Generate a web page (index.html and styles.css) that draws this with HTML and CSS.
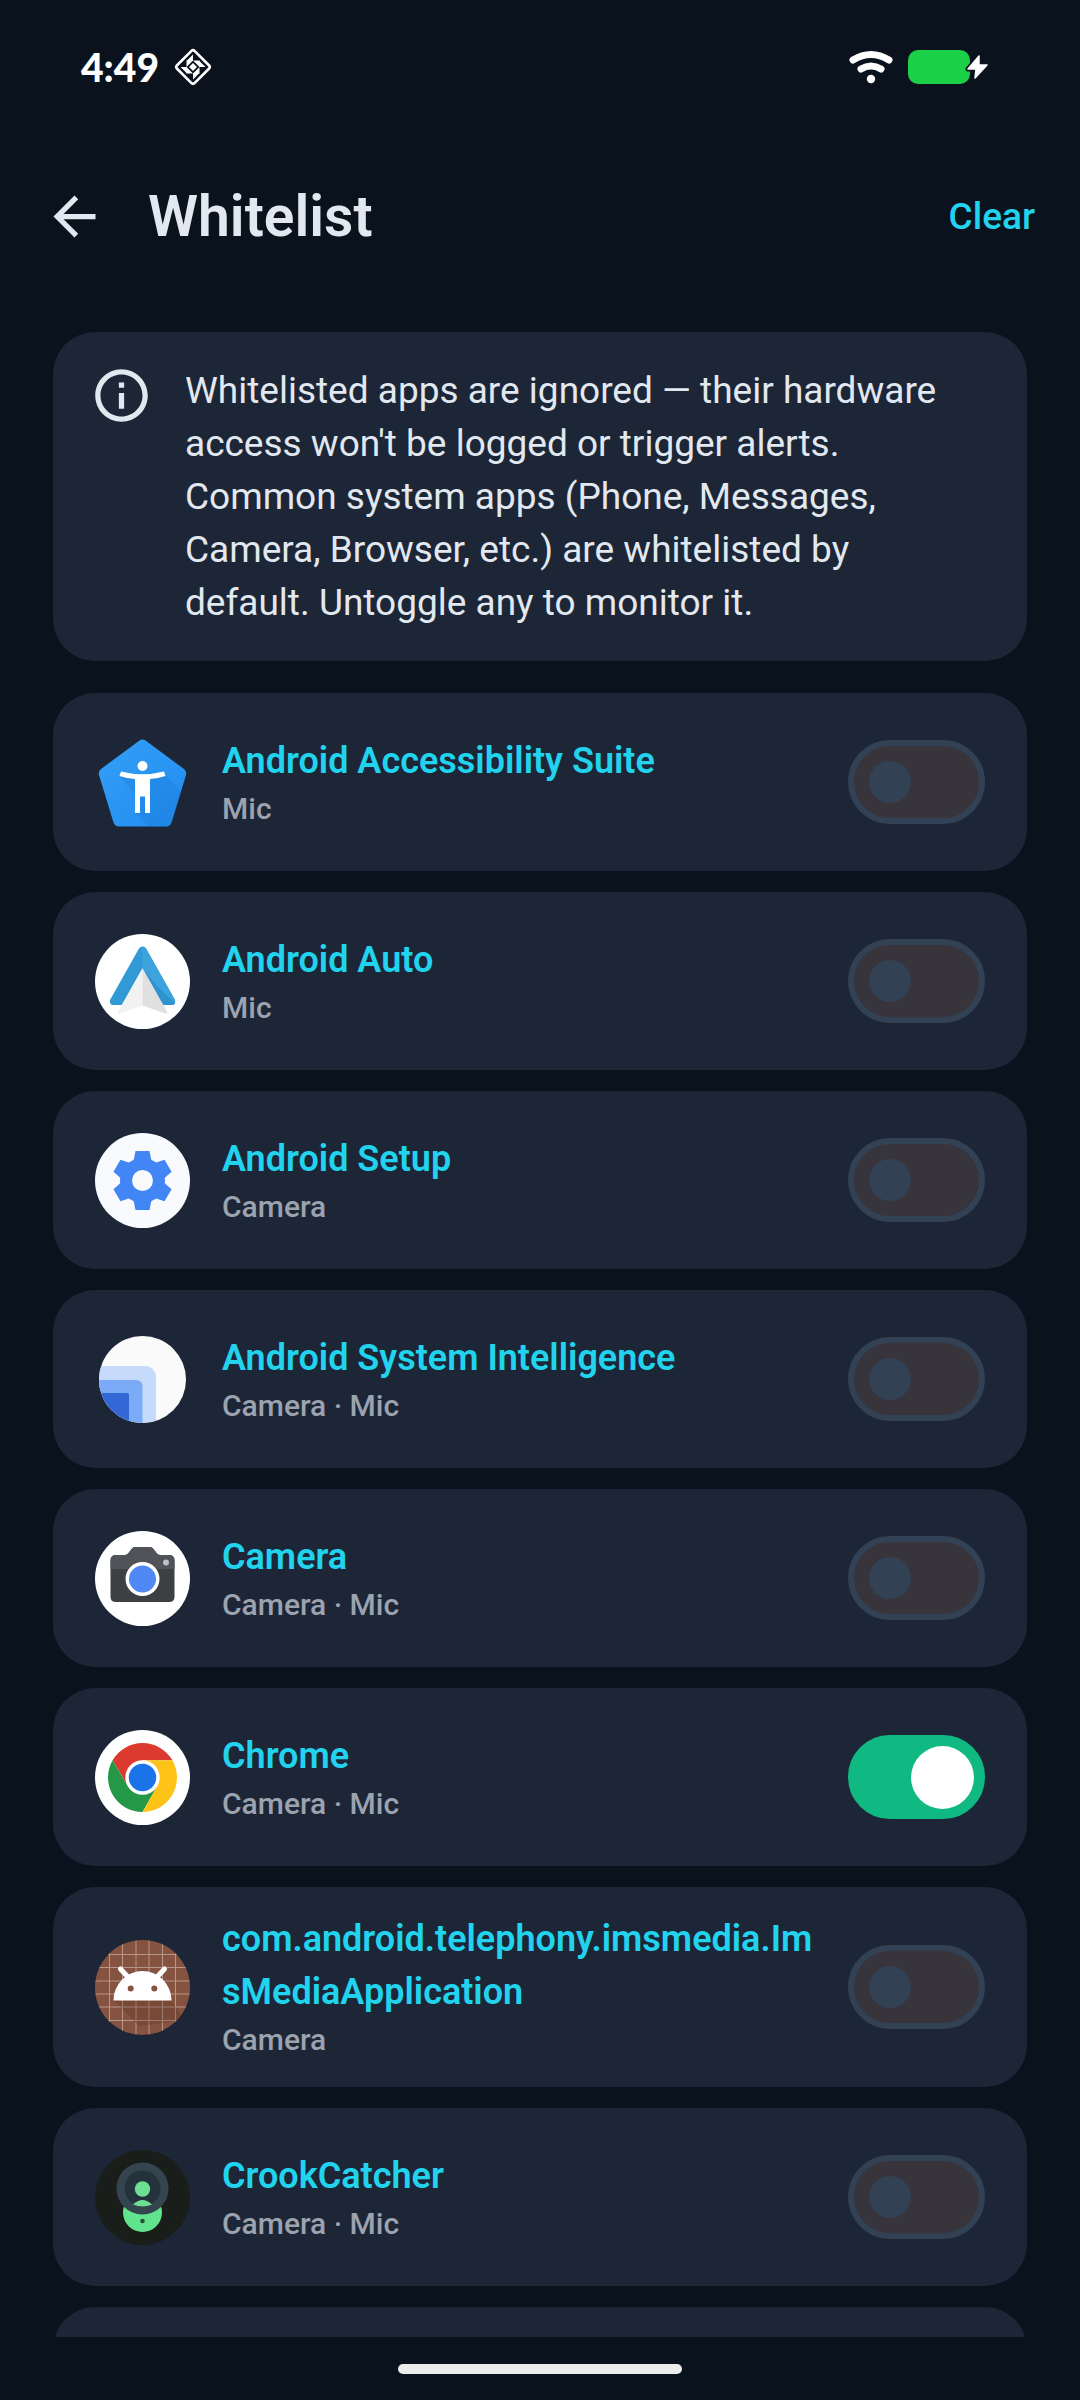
FILE: index.html
```html
<!doctype html>
<html lang="en">
    <head>
        <meta charset="UTF-8" />
        <meta name="viewport" content="width=device-width, initial-scale=1.0" />
        <title>Whitelist</title>
        <link rel="stylesheet" href="styles.css">
    </head>
    <body>
        <div class="status-bar">
            <div class="status-group">
                <span class="clock">4:49</span>
                <svg class="status-app" viewBox="-19 -19 38 38" fill="#fff">
                    <rect x="-12.500" y="-12.500" width="25" height="25" rx="2.500" transform="rotate(45)" fill="none" stroke="#fff" stroke-width="2.600" />
                    <path id="blade" d="M0 -12.500V-6H-6.500ZM0 -6.500H6.500V0ZM0 0V-4L4 0Z" />
                    <use href="#blade" transform="rotate(90)" />
                    <use href="#blade" transform="rotate(180)" />
                    <use href="#blade" transform="rotate(270)" />
                </svg>
            </div>
            <div class="status-group">
                <svg class="wifi" viewBox="0 0 44 34" fill="none" stroke="#fff" stroke-width="7" stroke-linecap="round">
                    <path d="M4 10Q22 -1 40 10M12 19Q22 13 32 19" />
                    <circle cx="22" cy="29" r="4.200" fill="#fff" stroke="none" />
                </svg>
                <svg class="battery" viewBox="0 0 82 34">
                    <rect width="62" height="34" rx="10" fill="#1ad047" />
                    <path d="M71 6L60 19H68L67 28L79 15H71Z" fill="#fff" stroke="#0b121e" stroke-width="5" stroke-linejoin="round" />
                    <path d="M71 6L60 19H68L67 28L79 15H71Z" fill="#fff" stroke="#fff" stroke-width="1.500" stroke-linejoin="round" />
                </svg>
            </div>
        </div>

        <header class="app-bar">
            <button type="button" class="back" aria-label="Back">
                <svg viewBox="0 0 24 24" fill="#e2e8f0">
                    <path d="M20 11H7.83l5.59-5.59L12 4l-8 8 8 8 1.41-1.41L7.83 13H20v-2z" />
                </svg>
            </button>
            <h1>Whitelist</h1>
            <button type="button" class="clear">Clear</button>
        </header>

        <main>
            <section class="card info">
                <svg class="info-icon" viewBox="0 0 24 24" fill="#e2e8f0">
                    <path d="M11 7h2v2h-2zm0 4h2v6h-2zm1-9C6.48 2 2 6.48 2 12s4.48 10 10 10 10-4.48 10-10S17.52 2 12 2zm0 18c-4.41 0-8-3.59-8-8s3.59-8 8-8 8 3.59 8 8-3.59 8-8 8z" />
                </svg>
                <p>
                    Whitelisted apps are ignored — their hardware access won't be
                    logged or trigger alerts. Common system apps (Phone, Messages,
                    Camera, Browser, etc.) are whitelisted by default. Untoggle any
                    to monitor it.
                </p>
            </section>

            <ul class="apps">
                <li class="card app">
                    <svg class="app-icon" viewBox="0 0 95 95">
                        <defs>
                            <linearGradient id="a11y" x1="0" y1="0" x2="1" y2="1">
                                <stop offset="0" stop-color="#35a0f8" />
                                <stop offset="1" stop-color="#1f8bee" />
                            </linearGradient>
                        </defs>
                        <path d="M44.500 5.500Q47.500 3.500 50.500 5.500L89 34Q92 36.500 91 40L76.500 87.500Q75 91.500 71 91.500H24Q20 91.500 18.500 87.500L4 40Q3 36.500 6 34Z" fill="url(#a11y)" />
                        <path d="M25 42L41 60V78L54 91.500H71Q75 91.500 76.500 87.500L86 57L70 39Z" fill="#1976d2" opacity=".3" />
                        <circle cx="47.500" cy="31" r="5" fill="#fff" />
                        <path d="M26 36.500Q47.500 42 69 36.500L70.500 41Q63 43.500 55 44V78H50V61.500H45V78H40V44Q32 43.500 24.500 41Z" fill="#fff" />
                    </svg>
                    <div class="app-text">
                        <label for="app1">Android Accessibility Suite</label>
                        <p>Mic</p>
                    </div>
                    <div class="switch"><input type="checkbox" id="app1" /></div>
                </li>
                <li class="card app">
                    <svg class="app-icon" viewBox="0 0 95 95">
                        <circle cx="47.500" cy="47.500" r="47.500" fill="#fff" />
                        <path d="M44 14.500Q47.500 10.500 51 14.500L80 66Q81 71 76.500 71H67.500L47.500 35L27.500 71H18.500Q14 71 15 66Z" fill="#3199d6" />
                        <path d="M47.500 12.500Q50 12.500 51 14.500L80 66Q81 71 76.500 71H67.500L47.500 35Z" fill="#3da3dd" />
                        <path d="M47.500 34L67.500 71H76.500Q79 71 80 69L62 52Z" fill="#2f93cf" />
                        <path d="M47.500 34V71.500L25 79.500Q22.500 80 23 77.500Z" fill="#f2f2f2" />
                        <path d="M47.500 34V71.500L70 79.500Q73 80 72 77.500Z" fill="#e0e0e0" />
                    </svg>
                    <div class="app-text">
                        <label for="app2">Android Auto</label>
                        <p>Mic</p>
                    </div>
                    <div class="switch"><input type="checkbox" id="app2" /></div>
                </li>
                <li class="card app">
                    <svg class="app-icon" viewBox="-47.500 -47.500 95 95">
                        <circle r="47.500" fill="#f8fafe" />
                        <g fill="#4285f4">
                            <circle r="22.500" />
                            <path id="tooth" d="M-7 -29.500H7L9.500 -17H-9.500Z" />
                            <use href="#tooth" transform="rotate(60)" />
                            <use href="#tooth" transform="rotate(120)" />
                            <use href="#tooth" transform="rotate(180)" />
                            <use href="#tooth" transform="rotate(240)" />
                            <use href="#tooth" transform="rotate(300)" />
                        </g>
                        <circle r="10.500" fill="#f8fafe" />
                    </svg>
                    <div class="app-text">
                        <label for="app3">Android Setup</label>
                        <p>Camera</p>
                    </div>
                    <div class="switch"><input type="checkbox" id="app3" /></div>
                </li>
                <li class="card app">
                    <svg class="app-icon" viewBox="0 0 95 95">
                        <clipPath id="disc"><circle cx="47.500" cy="47.500" r="43.500" /></clipPath>
                        <g clip-path="url(#disc)">
                            <rect width="95" height="95" fill="#fafafa" />
                            <rect x="-20" y="34" width="81" height="90" rx="11" fill="#c6dafc" />
                            <rect x="-20" y="48" width="67.500" height="90" rx="6" fill="#7baaf7" />
                            <rect x="-20" y="61" width="54" height="90" rx="2" fill="#3367d6" />
                        </g>
                    </svg>
                    <div class="app-text">
                        <label for="app4">Android System Intelligence</label>
                        <p>Camera · Mic</p>
                    </div>
                    <div class="switch"><input type="checkbox" id="app4" /></div>
                </li>
                <li class="card app">
                    <svg class="app-icon" viewBox="0 0 95 95">
                        <circle cx="47.500" cy="47.500" r="47.500" fill="#fff" />
                        <path d="M21 24H30Q32 24 33.500 22L37 17.500Q38 16 40 16H55Q57 16 58 17.500L61.500 22Q63 24 65 24H74Q79.500 24 79.500 29.500V66Q79.500 71 74 71H21Q15.500 71 15.500 66V29.500Q15.500 24 21 24Z" fill="#3c4043" />
                        <path d="M21 24H30Q32 24 33.500 22L37 17.500Q38 16 40 16H55Q57 16 58 17.500L61.500 22Q63 24 65 24H74Q79.500 24 79.500 29.500V38H15.500V29.500Q15.500 24 21 24Z" fill="#505458" />
                        <circle cx="47.500" cy="48" r="17" fill="#fff" />
                        <circle cx="47.500" cy="48" r="13.500" fill="#5089f4" />
                        <circle cx="71" cy="31.500" r="3" fill="#bdc1c6" />
                    </svg>
                    <div class="app-text">
                        <label for="app5">Camera</label>
                        <p>Camera · Mic</p>
                    </div>
                    <div class="switch"><input type="checkbox" id="app5" /></div>
                </li>
                <li class="card app">
                    <svg class="app-icon" viewBox="-47.500 -47.500 95 95">
                        <circle r="47.500" fill="#fff" />
                        <path d="M29.900 -17.200A34.500 34.500 0 0 0 -29.900 -17.200L-14.900 8.600L0 0V-17.200Z" fill="#dc3a2e" />
                        <path d="M-29.900 -17.200A34.500 34.500 0 0 0 0 34.500L14.900 8.600L0 0L-14.900 8.600Z" fill="#249847" />
                        <path d="M0 34.500A34.500 34.500 0 0 0 29.900 -17.200H0V0L14.900 8.600Z" fill="#fdc417" />
                        <circle r="17.200" fill="#fff" />
                        <circle r="13.700" fill="#1a73e8" />
                    </svg>
                    <div class="app-text">
                        <label for="app6">Chrome</label>
                        <p>Camera · Mic</p>
                    </div>
                    <div class="switch"><input type="checkbox" id="app6" checked /></div>
                </li>
                <li class="card app">
                    <svg class="app-icon" viewBox="0 0 95 95">
                        <clipPath id="round"><circle cx="47.500" cy="47.500" r="47.500" /></clipPath>
                        <g clip-path="url(#round)">
                            <rect width="95" height="95" fill="#85533f" />
                            <path d="M14.500 0V95M27.500 0V95M41 0V95M54 0V95M67.500 0V95M80.500 0V95M0 14.500H95M0 27.500H95M0 41H95M0 54H95M0 67H95M0 80.500H95" stroke="#b8978b" />
                            <path d="M19 60.500L44 86L90 80L76 60.500Z" fill="#4e2a1c" opacity=".25" />
                        </g>
                        <path d="M18.500 60.500A29 29.500 0 0 1 76.500 60.500Z" fill="#fff" />
                        <path d="M25.500 29L34 38M69.500 29L61 38" stroke="#fff" stroke-width="5" stroke-linecap="round" />
                        <circle cx="35.700" cy="48.500" r="3" fill="#85533f" />
                        <circle cx="59.300" cy="48.500" r="3" fill="#85533f" />
                    </svg>
                    <div class="app-text">
                        <label for="app7">com.android.telephony.imsmedia.ImsMediaApplication</label>
                        <p>Camera</p>
                    </div>
                    <div class="switch"><input type="checkbox" id="app7" /></div>
                </li>
                <li class="card app">
                    <svg class="app-icon" viewBox="0 0 95 95">
                        <circle cx="47.500" cy="47.500" r="47.500" fill="#1a1e1b" />
                        <circle cx="47.500" cy="62.500" r="19.500" fill="#62e38d" />
                        <circle cx="47.500" cy="38.500" r="26" fill="#35454f" />
                        <circle cx="47.500" cy="38.500" r="18" fill="#24323c" />
                        <circle cx="47.500" cy="39" r="7.700" fill="#6ddf92" />
                        <path d="M38 54.500Q47.500 45.500 57 54.500Q47.500 58.500 38 54.500Z" fill="#6ddf92" />
                        <circle cx="47.500" cy="71" r="2.300" fill="#24503c" />
                    </svg>
                    <div class="app-text">
                        <label for="app8">CrookCatcher</label>
                        <p>Camera · Mic</p>
                    </div>
                    <div class="switch"><input type="checkbox" id="app8" /></div>
                </li>
                <li class="card app"></li>
            </ul>
        </main>

        <footer class="nav-bar">
            <div class="home-pill"></div>
        </footer>
    </body>
</html>
```
FILE: styles.css
```css
* {
    box-sizing: border-box;
}
body {
    margin: 0;
    height: 100vh;
    display: flex;
    flex-direction: column;
    overflow: hidden;
    background-color: #0a121e;
    color: #e2e8f0;
    font-family: Roboto, "Liberation Sans", sans-serif;
}
h1,
p,
ul {
    margin: 0;
    padding: 0;
}
button {
    background: none;
    border: none;
    padding: 0;
    font-family: inherit;
    cursor: pointer;
}
svg {
    display: block;
    flex-shrink: 0;
}

.status-bar {
    display: flex;
    justify-content: space-between;
    align-items: center;
    flex-shrink: 0;
    height: 132px;
    padding: 2px 90px 0 81px;
}
.status-group {
    display: flex;
    align-items: center;
    gap: 15px;
}
.clock {
    color: white;
    font-family: Lato, sans-serif;
    font-size: 39px;
    font-weight: 900;
}
.status-app {
    width: 38px;
    height: 38px;
}
.wifi {
    width: 44px;
    height: 34px;
}
.battery {
    width: 82px;
    height: 34px;
}

.app-bar {
    display: flex;
    align-items: center;
    flex-shrink: 0;
    height: 168px;
    padding: 0 45px 0 43px;
}
.back svg {
    width: 63px;
    height: 63px;
}
h1 {
    flex: 1;
    margin-left: 42px;
    font-size: 57px;
    font-weight: 600;
}
.clear {
    color: #22d3ee;
    font-size: 37px;
    font-weight: 500;
}

main {
    flex: 1;
    min-height: 0;
    overflow: hidden;
    padding: 32px 53px 0;
}
.card {
    background-color: #1c2637;
    border-radius: 42px;
}
.info {
    display: flex;
    gap: 32px;
    padding: 32px 48px 32px 37px;
    margin-bottom: 32px;
    font-size: 37px;
    line-height: 53px;
}
.info-icon {
    width: 63px;
    height: 63px;
}
.apps {
    display: flex;
    flex-direction: column;
    gap: 21px;
    list-style: none;
}
.app {
    display: flex;
    align-items: center;
    min-height: 178px;
    padding: 26px 42px;
}
.app-icon {
    width: 95px;
    height: 95px;
    margin-right: 32px;
}
.app-text {
    flex: 1;
    min-width: 0;
}
.app-text label {
    display: block;
    color: #22d3ee;
    font-size: 36px;
    font-weight: 600;
    line-height: 53px;
    word-break: break-all;
}
.app-text p {
    color: #9ca3af;
    font-size: 30px;
    font-weight: 500;
    line-height: 42px;
}

.switch {
    display: flex;
    align-items: center;
    height: 126px;
    margin-left: 24px;
}
.switch input {
    appearance: none;
    display: flex;
    align-items: center;
    width: 137px;
    height: 84px;
    margin: 0;
    padding: 0 15px;
    border: 6px solid #334155;
    border-radius: 42px;
    background-color: #37343b;
    cursor: pointer;
}
.switch input::before {
    content: "";
    width: 42px;
    height: 42px;
    border-radius: 50%;
    background-color: #334155;
}
.switch input:checked {
    justify-content: flex-end;
    padding: 0 5px;
    border-color: #10b981;
    background-color: #10b981;
}
.switch input:checked::before {
    width: 63px;
    height: 63px;
    background-color: white;
}

.nav-bar {
    display: flex;
    justify-content: center;
    align-items: center;
    flex-shrink: 0;
    height: 63px;
}
.home-pill {
    width: 284px;
    height: 10px;
    border-radius: 5px;
    background-color: #ececec;
}
```
